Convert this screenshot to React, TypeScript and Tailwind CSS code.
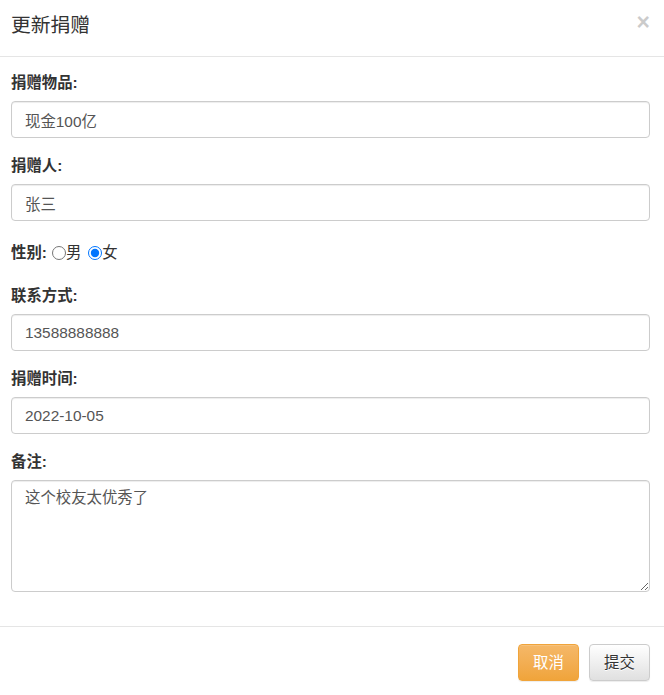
import React, { useState } from 'react';

const FONT = "font-['Helvetica_Neue','Liberation_Sans','Noto_Sans_CJK_SC',sans-serif]";

const inputCls =
  'block w-full h-[37px] rounded-[4px] border border-[#cccccc] bg-white px-[13px] text-[15.4px] text-[#555555] shadow-[inset_0_1px_1px_rgba(0,0,0,0.075)] outline-none';

function Field({ label, value, onChange }: { label: string; value: string; onChange: (v: string) => void }) {
  return (
    <div className="mb-[18px]">
      <label className="mb-[8px] block h-[20px] text-[15.4px] font-bold leading-[20px] text-[#333333]">{label}</label>
      <input type="text" value={value} onChange={(e) => onChange(e.target.value)} className={inputCls} />
    </div>
  );
}

export default function App() {
  const [item, setItem] = useState('现金100亿');
  const [donor, setDonor] = useState('张三');
  const [gender, setGender] = useState('female');
  const [phone, setPhone] = useState('13588888888');
  const [date, setDate] = useState('2022-10-05');
  const [note, setNote] = useState('这个校友太优秀了');

  return (
    <div className={`h-[695px] w-[664px] overflow-hidden bg-white ${FONT}`}>
      <div className="flex h-[57px] items-start justify-between border-b border-[#e5e5e5] pl-[11px] pr-[14px] pt-[11px]">
        <h4 className="text-[19.8px] leading-[28px] text-[#333333]">更新捐赠</h4>
        <button className="mt-[-3px] text-[23px] font-bold leading-[28px] text-black opacity-20">×</button>
      </div>

      <div className="pl-[11px] pr-[14px] pt-[16px]">
        <Field label="捐赠物品:" value={item} onChange={setItem} />
        <Field label="捐赠人:" value={donor} onChange={setDonor} />

        <div className="mb-[23px] mt-[22px] flex h-[20px] items-center text-[15.4px] leading-[20px] text-[#333333]">
          <span className="font-bold">性别:</span>
          <label className="ml-[5px] flex items-center">
            <input
              type="radio"
              name="gender"
              checked={gender === 'male'}
              onChange={() => setGender('male')}
              className="m-0 h-[14px] w-[14px]"
            />
            <span>男</span>
          </label>
          <label className="ml-[7px] flex items-center">
            <input
              type="radio"
              name="gender"
              checked={gender === 'female'}
              onChange={() => setGender('female')}
              className="m-0 h-[14px] w-[14px]"
            />
            <span>女</span>
          </label>
        </div>

        <Field label="联系方式:" value={phone} onChange={setPhone} />
        <Field label="捐赠时间:" value={date} onChange={setDate} />

        <div>
          <label className="mb-[8px] block h-[20px] text-[15.4px] font-bold leading-[20px] text-[#333333]">备注:</label>
          <textarea
            value={note}
            onChange={(e) => setNote(e.target.value)}
            className="block h-[112px] w-full resize-y rounded-[4px] border border-[#cccccc] px-[13px] py-[6px] text-[15.4px] leading-[22px] text-[#555555] shadow-[inset_0_1px_1px_rgba(0,0,0,0.075)] outline-none"
          />
        </div>
      </div>

      <div className="mt-[34px] flex justify-end gap-[10px] border-t border-[#e5e5e5] pr-[14px] pt-[17px]">
        <button className="h-[37px] w-[61px] rounded-[4px] border border-[#f0a43a] bg-gradient-to-b from-[#f5b868] to-[#f0a43a] text-[15.4px] text-white shadow-[inset_0_1px_0_rgba(255,255,255,0.15),0_1px_1px_rgba(0,0,0,0.075)]">
          取消
        </button>
        <button className="h-[37px] w-[61px] rounded-[4px] border border-[#cccccc] bg-gradient-to-b from-white to-[#e0e0e0] text-[15.4px] text-[#333333] shadow-[inset_0_1px_0_rgba(255,255,255,0.15),0_1px_1px_rgba(0,0,0,0.075)] [text-shadow:0_1px_0_#fff]">
          提交
        </button>
      </div>
    </div>
  );
}
